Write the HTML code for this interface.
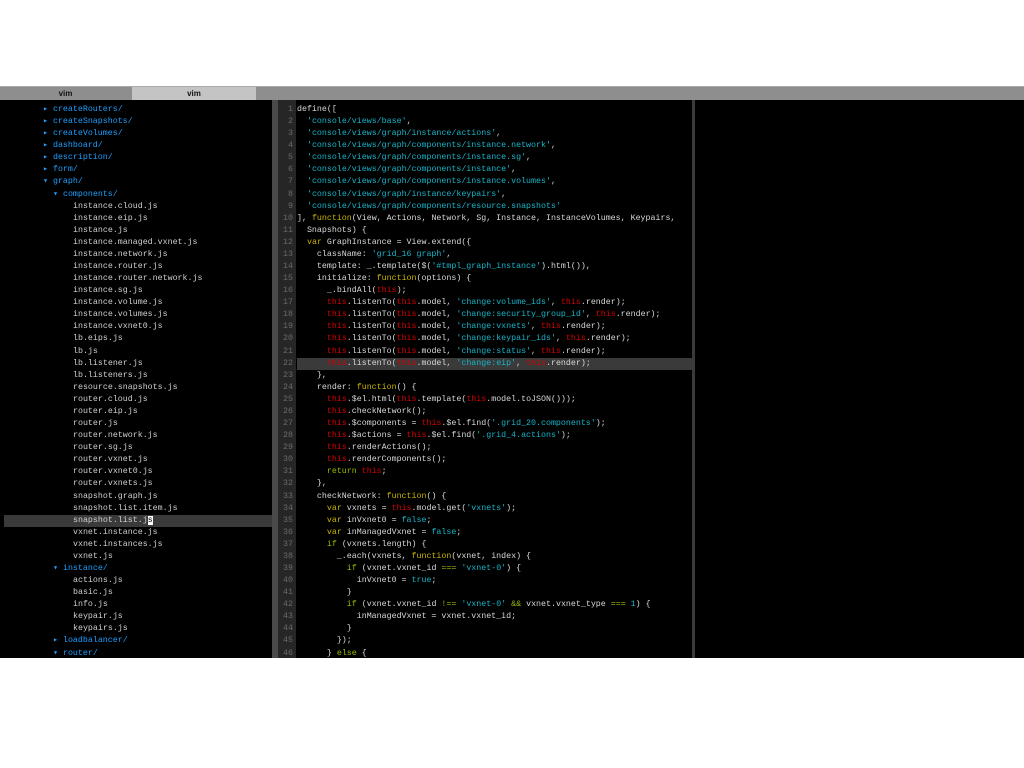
<!DOCTYPE html>
<html><head><meta charset="utf-8"><style>
body{margin:0;background:#fff;width:1024px;height:768px;position:relative;overflow:hidden;font-family:"Liberation Mono",monospace;}
#tabs{position:absolute;left:0;top:86px;width:1024px;height:14px;background:#8e8e8e;border-top:1px solid #aaa;box-sizing:border-box;}
.tab{position:absolute;top:0;height:13px;font:bold 8px "Liberation Sans",sans-serif;color:#111;text-align:center;line-height:13px;}
#term{position:absolute;left:0;top:100px;width:1024px;height:558px;background:#000;overflow:hidden;}
#left{position:absolute;left:0;top:4px;width:272px;}
.r{height:12.09px;line-height:12.09px;font-size:8.3px;white-space:pre;color:#d0d0d0;position:relative;}
.d{color:#1e9fff;}
#sep{position:absolute;left:272px;top:0;width:6px;height:558px;background:#4a4a4a;}
#nums{position:absolute;left:278px;top:0;width:18px;background:#262626;height:558px;padding-top:4px;box-sizing:border-box;}
#nums .r{color:#6a6a6a;text-align:right;padding-right:3px;}
#code{position:absolute;left:297px;top:4px;width:395px;}
#code .r{color:#d8d8d8;}
#vl{position:absolute;left:692px;top:0;width:3px;height:558px;background:#3a3a3a;}
.k{color:#c8b400}.f{color:#c8b400}.c{color:#9ab800}.t{color:#d40000}.s{color:#18b4c8}
.hl{background:#3a3a3a;}
</style></head><body>
<div id="tabs">
<div class="tab" style="left:0;width:131px;background:#8e8e8e;">vim</div>
<div class="tab" style="left:132px;width:124px;background:#c4c4c4;">vim</div>
</div>
<div id="term">
<div id="left">
<div class="r d" style="padding-left:43px">▸ createRouters/</div>
<div class="r d" style="padding-left:43px">▸ createSnapshots/</div>
<div class="r d" style="padding-left:43px">▸ createVolumes/</div>
<div class="r d" style="padding-left:43px">▸ dashboard/</div>
<div class="r d" style="padding-left:43px">▸ description/</div>
<div class="r d" style="padding-left:43px">▸ form/</div>
<div class="r d" style="padding-left:43px">▾ graph/</div>
<div class="r d" style="padding-left:53px">▾ components/</div>
<div class="r" style="padding-left:73px">instance.cloud.js</div>
<div class="r" style="padding-left:73px">instance.eip.js</div>
<div class="r" style="padding-left:73px">instance.js</div>
<div class="r" style="padding-left:73px">instance.managed.vxnet.js</div>
<div class="r" style="padding-left:73px">instance.network.js</div>
<div class="r" style="padding-left:73px">instance.router.js</div>
<div class="r" style="padding-left:73px">instance.router.network.js</div>
<div class="r" style="padding-left:73px">instance.sg.js</div>
<div class="r" style="padding-left:73px">instance.volume.js</div>
<div class="r" style="padding-left:73px">instance.volumes.js</div>
<div class="r" style="padding-left:73px">instance.vxnet0.js</div>
<div class="r" style="padding-left:73px">lb.eips.js</div>
<div class="r" style="padding-left:73px">lb.js</div>
<div class="r" style="padding-left:73px">lb.listener.js</div>
<div class="r" style="padding-left:73px">lb.listeners.js</div>
<div class="r" style="padding-left:73px">resource.snapshots.js</div>
<div class="r" style="padding-left:73px">router.cloud.js</div>
<div class="r" style="padding-left:73px">router.eip.js</div>
<div class="r" style="padding-left:73px">router.js</div>
<div class="r" style="padding-left:73px">router.network.js</div>
<div class="r" style="padding-left:73px">router.sg.js</div>
<div class="r" style="padding-left:73px">router.vxnet.js</div>
<div class="r" style="padding-left:73px">router.vxnet0.js</div>
<div class="r" style="padding-left:73px">router.vxnets.js</div>
<div class="r" style="padding-left:73px">snapshot.graph.js</div>
<div class="r" style="padding-left:73px">snapshot.list.item.js</div>
<div class="r hl" style="margin-left:4px;padding-left:69px">snapshot.list.j<span style="background:#fff;color:#000">s</span></div>
<div class="r" style="padding-left:73px">vxnet.instance.js</div>
<div class="r" style="padding-left:73px">vxnet.instances.js</div>
<div class="r" style="padding-left:73px">vxnet.js</div>
<div class="r d" style="padding-left:53px">▾ instance/</div>
<div class="r" style="padding-left:73px">actions.js</div>
<div class="r" style="padding-left:73px">basic.js</div>
<div class="r" style="padding-left:73px">info.js</div>
<div class="r" style="padding-left:73px">keypair.js</div>
<div class="r" style="padding-left:73px">keypairs.js</div>
<div class="r d" style="padding-left:53px">▸ loadbalancer/</div>
<div class="r d" style="padding-left:53px">▾ router/</div>
</div>
<div id="sep"></div>
<div id="nums">
<div class="r">1</div><div class="r">2</div><div class="r">3</div><div class="r">4</div><div class="r">5</div><div class="r">6</div><div class="r">7</div><div class="r">8</div><div class="r">9</div><div class="r">10</div><div class="r">11</div><div class="r">12</div><div class="r">13</div><div class="r">14</div><div class="r">15</div><div class="r">16</div><div class="r">17</div><div class="r">18</div><div class="r">19</div><div class="r">20</div><div class="r">21</div><div class="r">22</div><div class="r">23</div><div class="r">24</div><div class="r">25</div><div class="r">26</div><div class="r">27</div><div class="r">28</div><div class="r">29</div><div class="r">30</div><div class="r">31</div><div class="r">32</div><div class="r">33</div><div class="r">34</div><div class="r">35</div><div class="r">36</div><div class="r">37</div><div class="r">38</div><div class="r">39</div><div class="r">40</div><div class="r">41</div><div class="r">42</div><div class="r">43</div><div class="r">44</div><div class="r">45</div><div class="r">46</div>
</div>
<div id="code">
<div class="r">define([</div>
<div class="r">  <span class="s">'console/views/base'</span>,</div>
<div class="r">  <span class="s">'console/views/graph/instance/actions'</span>,</div>
<div class="r">  <span class="s">'console/views/graph/components/instance.network'</span>,</div>
<div class="r">  <span class="s">'console/views/graph/components/instance.sg'</span>,</div>
<div class="r">  <span class="s">'console/views/graph/components/instance'</span>,</div>
<div class="r">  <span class="s">'console/views/graph/components/instance.volumes'</span>,</div>
<div class="r">  <span class="s">'console/views/graph/instance/keypairs'</span>,</div>
<div class="r">  <span class="s">'console/views/graph/components/resource.snapshots'</span></div>
<div class="r">], <span class="f">function</span>(View, Actions, Network, Sg, Instance, InstanceVolumes, Keypairs,</div>
<div class="r">  Snapshots) {</div>
<div class="r">  <span class="k">var</span> GraphInstance = View.extend({</div>
<div class="r">    className: <span class="s">'grid_16 graph'</span>,</div>
<div class="r">    template: _.template($(<span class="s">'#tmpl_graph_instance'</span>).html()),</div>
<div class="r">    initialize: <span class="f">function</span>(options) {</div>
<div class="r">      _.bindAll(<span class="t">this</span>);</div>
<div class="r">      <span class="t">this</span>.listenTo(<span class="t">this</span>.model, <span class="s">'change:volume_ids'</span>, <span class="t">this</span>.render);</div>
<div class="r">      <span class="t">this</span>.listenTo(<span class="t">this</span>.model, <span class="s">'change:security_group_id'</span>, <span class="t">this</span>.render);</div>
<div class="r">      <span class="t">this</span>.listenTo(<span class="t">this</span>.model, <span class="s">'change:vxnets'</span>, <span class="t">this</span>.render);</div>
<div class="r">      <span class="t">this</span>.listenTo(<span class="t">this</span>.model, <span class="s">'change:keypair_ids'</span>, <span class="t">this</span>.render);</div>
<div class="r">      <span class="t">this</span>.listenTo(<span class="t">this</span>.model, <span class="s">'change:status'</span>, <span class="t">this</span>.render);</div>
<div class="r hl">      <span class="t">this</span>.listenTo(<span class="t">this</span>.model, <span class="s">'change:eip'</span>, <span class="t">this</span>.render);</div>
<div class="r">    },</div>
<div class="r">    render: <span class="f">function</span>() {</div>
<div class="r">      <span class="t">this</span>.$el.html(<span class="t">this</span>.template(<span class="t">this</span>.model.toJSON()));</div>
<div class="r">      <span class="t">this</span>.checkNetwork();</div>
<div class="r">      <span class="t">this</span>.$components = <span class="t">this</span>.$el.find(<span class="s">'.grid_20.components'</span>);</div>
<div class="r">      <span class="t">this</span>.$actions = <span class="t">this</span>.$el.find(<span class="s">'.grid_4.actions'</span>);</div>
<div class="r">      <span class="t">this</span>.renderActions();</div>
<div class="r">      <span class="t">this</span>.renderComponents();</div>
<div class="r">      <span class="c">return</span> <span class="t">this</span>;</div>
<div class="r">    },</div>
<div class="r">    checkNetwork: <span class="f">function</span>() {</div>
<div class="r">      <span class="k">var</span> vxnets = <span class="t">this</span>.model.get(<span class="s">'vxnets'</span>);</div>
<div class="r">      <span class="k">var</span> inVxnet0 = <span class="s">false</span>;</div>
<div class="r">      <span class="k">var</span> inManagedVxnet = <span class="s">false</span>;</div>
<div class="r">      <span class="c">if</span> (vxnets.length) {</div>
<div class="r">        _.each(vxnets, <span class="f">function</span>(vxnet, index) {</div>
<div class="r">          <span class="c">if</span> (vxnet.vxnet_id <span class="c">===</span> <span class="s">'vxnet-0'</span>) {</div>
<div class="r">            inVxnet0 = <span class="s">true</span>;</div>
<div class="r">          }</div>
<div class="r">          <span class="c">if</span> (vxnet.vxnet_id <span class="c">!==</span> <span class="s">'vxnet-0'</span> <span class="c">&amp;&amp;</span> vxnet.vxnet_type <span class="c">===</span> <span class="s">1</span>) {</div>
<div class="r">            inManagedVxnet = vxnet.vxnet_id;</div>
<div class="r">          }</div>
<div class="r">        });</div>
<div class="r">      } <span class="c">else</span> {</div>
</div>
<div id="vl"></div>
</div>
</body></html>
